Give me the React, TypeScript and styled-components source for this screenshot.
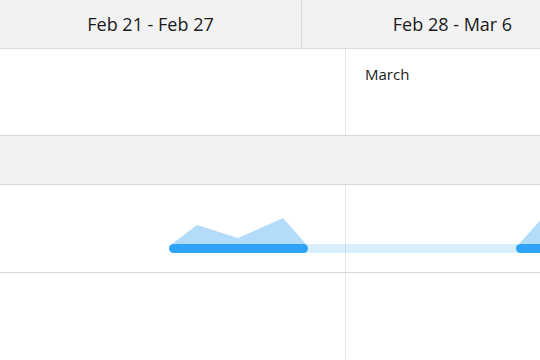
import React from "react";
import styled, { createGlobalStyle } from "styled-components";

const Global = createGlobalStyle`
  html, body { margin: 0; padding: 0; background: #fff; }
  body { width: 540px; height: 360px; overflow: hidden; font-family: "Open Sans", "Noto Sans", sans-serif; color: #1a1a1a; }
`;

const Page = styled.div`
  width: 540px;
  height: 360px;
  overflow: hidden;
  display: flex;
  flex-direction: column;
`;

const Header = styled.div`
  display: flex;
  height: 48px;
  flex: none;
  background: #f2f2f2;
  border-bottom: 1px solid #d9d9d9;
`;

const HeaderCell = styled.div`
  flex: none;
  width: 302px;
  display: flex;
  align-items: center;
  justify-content: center;
  font-size: 18px;
  border-right: 1px solid #d9d9d9;
  box-sizing: border-box;
  white-space: nowrap;
`;

const Row = styled.div<{ $h: number; $band?: boolean }>`
  position: relative;
  flex: none;
  height: ${(p) => p.$h}px;
  display: grid;
  grid-template-columns: 346px 1fr;
  background: ${(p) => (p.$band ? "#f1f1f1" : "#fff")};
  border-bottom: 1px solid #d6d6d6;
`;

const Col = styled.div<{ $line?: boolean }>`
  border-right: ${(p) => (p.$line ? "1px solid #e6e6e6" : "none")};
  padding: 15px 0 0 19px;
  font-size: 15px;
  box-sizing: border-box;
`;

const Chart = styled.svg`
  position: absolute;
  left: 0;
  top: 0;
  pointer-events: none;
`;

export default function App() {
  return (
    <Page>
      <Global />
      <Header>
        <HeaderCell>Feb 21 - Feb 27</HeaderCell>
        <HeaderCell>Feb 28 - Mar 6</HeaderCell>
      </Header>
      <Row $h={86}>
        <Col $line />
        <Col>March</Col>
      </Row>
      <Row $h={48} $band />
      <Row $h={87}>
        <Col $line />
        <Col />
        <Chart width={540} height={87} viewBox="0 0 540 87">
          <rect x={170} y={59} width={380} height={9} rx={4.5} fill="rgba(51,165,247,0.18)" />
          <polygon points="172,59 197,40 238,53 283,33 306,59" fill="#b3dcfb" />
          <polygon points="519,59 545,30 545,59" fill="#b3dcfb" />
          <rect x={169} y={59} width={139} height={9} rx={4.5} fill="#2ea3f7" />
          <rect x={516} y={59} width={40} height={9} rx={4.5} fill="#2ea3f7" />
        </Chart>
      </Row>
      <Row $h={87}>
        <Col $line />
        <Col />
      </Row>
    </Page>
  );
}
